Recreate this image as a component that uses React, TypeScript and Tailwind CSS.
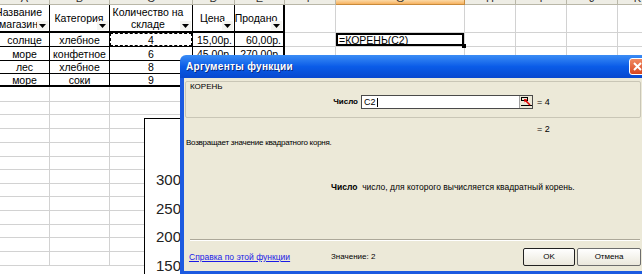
import React from "react";

const colW = [
  "w-[50px]",
  "w-[60px]",
  "w-[83px]",
  "w-[42px]",
  "w-[50px]",
  "w-[51px]",
  "w-[129px]",
  "w-[51px]",
  "w-[51px]",
  "w-[51px]",
  "w-[40px]",
];
const headPad = ["pr-[12px]", "pr-[1px]", "pr-[6px]", "pr-[2px]", "pr-[6px]"];
const letters = ["A", "B", "C", "D", "E", "F", "G", "H", "I", "J", "K"];

const rowH = [28, 14, 14, 13, 13, 15, 13, 14, 14, 14, 13, 14, 13, 14, 14, 13, 14, 14];
const hClass: Record<number, string> = {
  28: "h-[28px]",
  15: "h-[15px]",
  14: "h-[14px]",
  13: "h-[13px]",
};

const data: string[][] = [
  ["Название магазин", "Категория", "Количество на складе", "Цена", "Продано"],
  ["солнце", "хлебное", "4", "15,00р.", "60,00р."],
  ["море", "конфетное", "6", "45,00р.", "270,00р."],
  ["лес", "хлебное", "8", "30,00р.", "240,00р."],
  ["море", "соки", "9", "25,00р.", "225,00р."],
];

function cellBorder(r: number, c: number): string {
  if (r < 5 && c <= 4) {
    const b = r === 0 || r === 4 ? "border-b-2" : "border-b";
    const rr = c === 4 ? "border-r-2" : "border-r";
    return `${b} ${rr} border-black`;
  }
  return "border-b border-r border-[#d2d2d2]";
}

function FilterBtn() {
  return (
    <div className="absolute right-[1px] bottom-[1px] w-[11px] h-[9px] bg-[#f4f4f0] flex items-center justify-center">
      <svg width="7" height="4" viewBox="0 0 7 4">
        <path d="M0 0 L7 0 L3.5 4 Z" fill="#000" />
      </svg>
    </div>
  );
}

function CollapseIcon() {
  return (
    <div className="w-[13px] h-[12px] bg-[#ece9d8] border-l border-[#a0a0a0] flex items-center justify-center">
      <svg width="11" height="10" viewBox="0 0 11 10">
        <rect x="0.5" y="0.5" width="6" height="3" fill="none" stroke="#000" strokeWidth="1" />
        <line x1="0" y1="8.5" x2="11" y2="8.5" stroke="#000" strokeWidth="1" />
        <line x1="9" y1="8" x2="4" y2="3" stroke="#e00000" strokeWidth="1.6" />
        <path d="M3 2 L6.5 2.5 L3.5 5.5 Z" fill="#e00000" />
      </svg>
    </div>
  );
}

export default function App() {
  return (
    <div className="relative w-[642px] h-[274px] overflow-hidden bg-white font-['Liberation_Sans',Arial,sans-serif] text-black">
      {/* column header row */}
      <div className="flex h-[5px]">
        {letters.map((l, i) => (
          <div
            key={l}
            className={`${colW[i]} shrink-0 h-[5px] overflow-hidden border-r border-b ${
              i === 6
                ? "bg-gradient-to-b from-[#fbd9a6] to-[#f6b25e] border-[#c98a3a]"
                : "bg-[#eeede5] border-[#b9b7a8]"
            }`}
          >
            <div className="h-[14px] -mt-[9px] flex items-center justify-center text-[11px] text-[#333]">
              {l}
            </div>
          </div>
        ))}
      </div>

      {/* sheet rows */}
      {rowH.map((h, r) => (
        <div key={r} className={`flex ${hClass[h]}`}>
          {letters.map((_, c) => {
            const txt = r < 5 && c <= 4 ? data[r][c] : "";
            const isHead = r === 0 && c <= 4;
            const align = isHead
              ? `justify-center text-center overflow-visible ${headPad[c]}`
              : c === 3 || c === 4
              ? "justify-end pr-[2px] overflow-hidden"
              : "justify-center text-center overflow-hidden";
            return (
              <div
                key={c}
                className={`${colW[c]} shrink-0 relative flex items-center ${align} ${cellBorder(
                  r,
                  c
                )} text-[10.5px] leading-[12px]`}
              >
                {isHead ? (
                  <span className="whitespace-pre">
                    {c === 0 ? "Название\nмагазин" : c === 2 ? "Количество на\nскладе" : txt}
                  </span>
                ) : (
                  <span className="whitespace-nowrap">{txt}</span>
                )}
                {isHead && <FilterBtn />}
                {r === 1 && c === 2 && (
                  <div className="absolute inset-0 border-[1.5px] border-dashed border-black" />
                )}
                {r === 1 && c === 6 && (
                  <div className="absolute inset-0 border-2 border-black flex items-center pl-[1px] whitespace-nowrap">
                    =КОРЕНЬ(C2)
                  </div>
                )}
              </div>
            );
          })}
        </div>
      ))}

      {/* fill handle of active cell */}
      <div className="absolute left-[462px] top-[44px] w-[4px] h-[4px] bg-black" />

      {/* chart */}
      <div className="absolute left-[144px] top-[118px] w-[70px] h-[170px] bg-white border border-black">
        <div className="flex flex-col w-[36px] pt-[47px] text-[15px] text-right text-[#222]">
          <div className="h-[28.5px] leading-[28px]">300</div>
          <div className="h-[28.5px] leading-[28px]">250</div>
          <div className="h-[28.5px] leading-[28px]">200</div>
          <div className="h-[28.5px] leading-[28px]">150</div>
        </div>
      </div>

      {/* dialog */}
      <div className="absolute left-[180px] top-[55px] w-[470px] h-[219px] flex flex-col">
        <div className="h-[23px] shrink-0 flex items-center rounded-tl-[6px] bg-gradient-to-b from-[#3a8cf5] via-[#0a5ce8] to-[#0848cf] pl-[6px]">
          <span className="text-white font-bold text-[10px] tracking-[0.3px] [text-shadow:1px_1px_0_#0a2a80]">
            Аргументы функции
          </span>
          <div className="ml-auto mr-[4px] w-[17px] h-[17px] rounded-[3px] border border-white bg-gradient-to-b from-[#f08a62] to-[#d8441c] flex items-center justify-center">
            <svg width="9" height="9" viewBox="0 0 9 9">
              <path d="M1 1 L8 8 M8 1 L1 8" stroke="#fff" strokeWidth="2" />
            </svg>
          </div>
        </div>
        <div className="flex-1 flex flex-col bg-[#ece9d8] border-l-4 border-r-4 border-b-[3px] border-[#1c5ae0] text-[8px] leading-[8px] text-black">
          {/* group box */}
          <div className="mt-[3px] ml-[1px] mr-[5px] h-[37px] border border-[#c9c6b6] rounded-[2px] flex flex-col">
            <div className="pl-[4px] h-[9px] leading-[9px]">КОРЕНЬ</div>
            <div className="mt-[4px] flex items-center h-[14px]">
              <div className="w-[172px] text-right font-bold">Число</div>
              <div className="ml-[3px] w-[172px] h-[14px] bg-white border border-[#4a4a4a] flex items-center">
                <span className="pl-[2px] text-[9px]">C2</span>
                <span className="w-[1px] h-[9px] bg-black ml-[1px]" />
                <div className="ml-auto">
                  <CollapseIcon />
                </div>
              </div>
              <div className="ml-[4px] text-[9px]">= 4</div>
            </div>
          </div>
          <div className="mt-[7px] pl-[353px] text-[9px]">= 2</div>
          <div className="mt-[6px] pl-[2px] tracking-[-0.25px]">Возвращает значение квадратного корня.</div>
          <div className="mt-[36px] pl-[147px] text-[8.5px]">
            <span className="font-bold">Число</span>
            <span>&nbsp; число, для которого вычисляется квадратный корень.</span>
          </div>
          <div className="mt-[48px] ml-[6px] mr-[6px] border-t border-[#aca899] border-b border-b-white" />
          <div className="mt-[7px] h-[18px] flex items-center">
            <a className="ml-[5px] w-[142px] text-[8.5px] text-[#1a1ae6] underline">Справка по этой функции</a>
            <span>Значение:&nbsp;2</span>
            <div className="ml-auto mr-[5px] flex gap-[2px]">
              <div className="w-[52px] h-[18px] rounded-[2px] border border-[#222] bg-gradient-to-b from-white to-[#ebe8dc] flex items-center justify-center">
                OK
              </div>
              <div className="w-[64px] h-[18px] rounded-[2px] border border-[#6d6d6d] bg-gradient-to-b from-white to-[#ebe8dc] flex items-center justify-center">
                Отмена
              </div>
            </div>
          </div>
        </div>
      </div>
    </div>
  );
}
